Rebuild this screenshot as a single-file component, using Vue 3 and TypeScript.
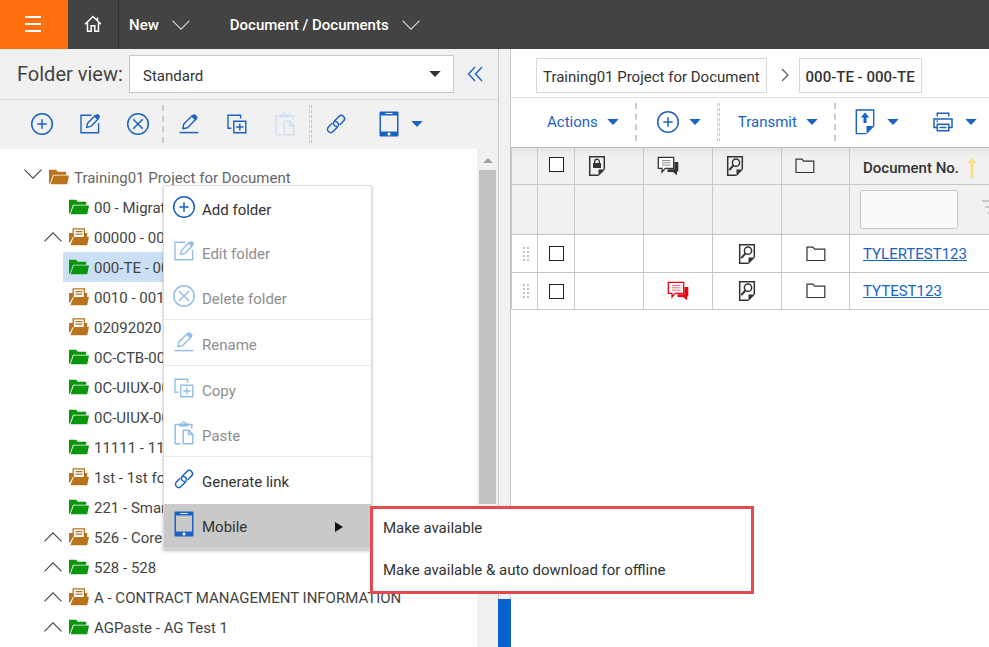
<script setup lang="ts">
import { ref } from 'vue'

interface TreeItem {
  label: string
  icon: 'folder' | 'folder-doc'
  expandable?: boolean
}

interface MenuItem {
  label: string
  icon: string
  disabled?: boolean
  divider?: boolean
}

interface DocumentRow {
  number: string
  flagged: boolean
}

const folderView = ref('Standard')
const numberFilter = ref('')
const selected = ref('000-TE - 000-TE')

const folders: TreeItem[] = [
  { label: '00 - Migration', icon: 'folder' },
  { label: '00000 - 00000', icon: 'folder-doc', expandable: true },
  { label: '000-TE - 000-TE', icon: 'folder' },
  { label: '0010 - 0010', icon: 'folder-doc' },
  { label: '02092020', icon: 'folder-doc' },
  { label: '0C-CTB-001', icon: 'folder' },
  { label: '0C-UIUX-001', icon: 'folder' },
  { label: '0C-UIUX-002', icon: 'folder' },
  { label: '11111 - 11111', icon: 'folder' },
  { label: '1st - 1st folder', icon: 'folder-doc' },
  { label: '221 - Smart', icon: 'folder' },
  { label: '526 - Core', icon: 'folder-doc', expandable: true },
  { label: '528 - 528', icon: 'folder', expandable: true },
  { label: 'A - CONTRACT MANAGEMENT INFORMATION', icon: 'folder-doc', expandable: true },
  { label: 'AGPaste - AG Test 1', icon: 'folder', expandable: true },
]

const menuItems: MenuItem[] = [
  { label: 'Add folder', icon: 'add' },
  { label: 'Edit folder', icon: 'edit', disabled: true },
  { label: 'Delete folder', icon: 'delete', disabled: true, divider: true },
  { label: 'Rename', icon: 'rename', disabled: true, divider: true },
  { label: 'Copy', icon: 'copy', disabled: true },
  { label: 'Paste', icon: 'paste', disabled: true, divider: true },
  { label: 'Generate link', icon: 'link' },
]

const rows: DocumentRow[] = [
  { number: 'TYLERTEST123', flagged: false },
  { number: 'TYTEST123', flagged: true },
]
</script>

<template>
  <div class="app">
    <svg class="sprite" aria-hidden="true">
      <symbol id="add" viewBox="0 0 24 24">
        <g fill="none" stroke="currentColor" stroke-width="1.5">
          <circle cx="12" cy="12" r="10.3" /><path d="M12 7.3v9.4M7.3 12h9.4" />
        </g>
      </symbol>
      <symbol id="delete" viewBox="0 0 24 24">
        <g fill="none" stroke="currentColor" stroke-width="1.5">
          <circle cx="12" cy="12" r="10.3" /><path d="M7.2 7.2l9.6 9.6M16.8 7.2l-9.6 9.6" />
        </g>
      </symbol>
      <symbol id="edit" viewBox="0 0 24 24">
        <path d="M13.5 3.2H3v17.6h17.6V11" fill="none" stroke="currentColor" stroke-width="1.4" />
        <path d="M8.6 15.4l1-4.2 7.6-7.7 3.2 3.2-7.7 7.7z" fill="none" stroke="currentColor" stroke-width="1.4" stroke-linejoin="round" />
        <path d="M16.2 4.6l2.2-2.2q1-.8 2 0l1.2 1.2q.8 1 0 2l-2.2 2.2z" fill="currentColor" />
      </symbol>
      <symbol id="rename" viewBox="0 0 24 24">
        <path d="M2.5 20.6h18.8" stroke="currentColor" stroke-width="1.5" />
        <path d="M5.8 16.8l1-4.8 8.6-8.6 3.7 3.7-8.6 8.6z" fill="none" stroke="currentColor" stroke-width="1.4" stroke-linejoin="round" />
        <path d="M14.2 4.6l2-2q1-.8 2 0l2 2q.8 1 0 2l-2 2z" fill="currentColor" />
      </symbol>
      <symbol id="copy" viewBox="0 0 24 24">
        <g fill="none" stroke="currentColor" stroke-width="1.4">
          <path d="M6.4 16.2H3V3.2h12.6v3.4" /><path d="M8.8 9.2h12v11.6h-12z" /><path d="M14.8 11.4v7.2M11.2 15h7.2" />
        </g>
      </symbol>
      <symbol id="paste" viewBox="0 0 24 26">
        <g fill="none" stroke="currentColor" stroke-width="1.5">
          <path d="M8.600 23.800H3.200V4.400h16.600v4" /><path d="M11.200 10.200h5.400l4.200 4.200v9.400h-9.600zM16.600 10.200v4.200h4.200" />
        </g>
        <path d="M7 6.6V3.4h2.4Q9.800 1.200 11.700 1.200Q13.600 1.200 14 3.400h2.400v3.200z" fill="currentColor" />
        <circle cx="11.700" cy="3.300" r=".8" fill="#fff" />
      </symbol>
      <symbol id="link" viewBox="0 0 24 24">
        <g transform="rotate(-45 12 12)" fill="none" stroke="currentColor" stroke-width="1.500" stroke-linecap="round">
          <path d="M14.500 15.200H19.500a3.200 3.200 0 0 0 0-6.400H13a3.200 3.200 0 0 0-2.400 5.300" />
          <path d="M9.500 8.800H4.500a3.200 3.200 0 0 0 0 6.400H11a3.200 3.200 0 0 0 2.400-5.300" />
        </g>
      </symbol>
      <symbol id="tablet" viewBox="0 0 20 26">
        <path fill="currentColor" fill-rule="evenodd" d="M1.500.5h17q1 0 1 1v23q0 1-1 1h-17q-1 0-1-1v-23q0-1 1-1zM2 4.500v16h16v-16z" />
        <path d="M6.500 2.500h7" stroke="#fff" stroke-width="1" /><circle cx="10" cy="23" r="1.500" fill="#fff" />
      </symbol>
      <symbol id="caret" viewBox="0 0 12 6"><path d="M.3 0h11.400L6 6z" fill="currentColor" /></symbol>
      <symbol id="chevron" viewBox="0 0 18 10"><path d="M.5.6L9 9.200 17.500.6" fill="none" stroke="currentColor" stroke-width="1.100" /></symbol>
      <symbol id="folder" viewBox="0 0 20 16">
        <path d="M0 .8h7l1.800 2h8.400v3H4L1 14.500H0z" fill="currentColor" />
        <path d="M4.700 6.400H20l-1.800 8.800H1.600z" fill="currentColor" />
      </symbol>
      <symbol id="folder-doc" viewBox="0 0 20 18">
        <path d="M0 5h4v3.800L1 14.500H0z" fill="currentColor" />
        <path d="M4.200 9V.9h11.200v8" fill="#fff" stroke="currentColor" stroke-width="1.300" />
        <path d="M6.500 3.600h6.800M6.500 6.200h6.800" stroke="currentColor" stroke-width="1.200" />
        <path d="M16 5h2.200v4H16z" fill="currentColor" />
        <path d="M4.700 9H20l-1.800 8.300H1.400z" fill="currentColor" />
      </symbol>
      <symbol id="lock-page" viewBox="0 0 18 22">
        <path d="M10.500 20.200H1.700V1.800h14.600v12.700" fill="none" stroke="currentColor" stroke-width="1.500" />
        <path d="M10.500 21v-6.500H17z" fill="currentColor" />
        <path d="M5 8h8v5H5z" fill="currentColor" /><path d="M6.700 8V6.500a2.300 2.300 0 0 1 4.600 0V8" fill="none" stroke="currentColor" stroke-width="1.300" />
      </symbol>
      <symbol id="search-page" viewBox="0 0 18 22">
        <path d="M10.500 20.200H1.700V1.800h14.600v12.700" fill="none" stroke="currentColor" stroke-width="1.500" />
        <path d="M10.500 21v-6.500H17z" fill="currentColor" />
        <circle cx="10" cy="7.700" r="3.600" fill="none" stroke="currentColor" stroke-width="1.500" />
        <path d="M7.400 10.500L3.200 15.200" stroke="currentColor" stroke-width="2" />
      </symbol>
      <symbol id="comments" viewBox="0 0 22 20">
        <path d="M17.400 6h3.900v9.500H20v3.800L16 16h-5.500v-2.800h6.900z" fill="currentColor" />
        <path d="M1.300 1.300h15.400v11H8.300L5 16v-3.700H1.300z" fill="#fff" stroke="currentColor" stroke-width="1.300" />
        <path d="M5 4.500h8.500M5 6.800h8.500M5 9.100h8.500" stroke="currentColor" stroke-width=".8" opacity=".7" />
      </symbol>
      <symbol id="folder-outline" viewBox="0 0 20 16">
        <path d="M1 14.500V1.200h6l1.600 2h10.200v11.300z" fill="none" stroke="currentColor" stroke-width="1.200" />
      </symbol>
      <symbol id="upload-page" viewBox="0 0 20 26">
        <path d="M11 24.600H1.300V1h17.400v16" fill="none" stroke="currentColor" stroke-width="1.400" />
        <path d="M11.500 25.300v-8.300h8z" fill="currentColor" />
        <path d="M10 3.600l4.300 4.900h-2.800v5.500h-3V8.500H5.700z" fill="currentColor" />
      </symbol>
      <symbol id="printer" viewBox="0 0 20 20">
        <g fill="none" stroke="currentColor" stroke-width="1.500">
          <path d="M4.300 4.500V1.200h11.400v3.300M4.300 15.500H1V7h18v8.500h-3.300M4.300 12.200h11.400v6.600H4.300zM6.500 15.500h7M3.500 9.300h1.500" />
        </g>
      </symbol>
      <symbol id="grip" viewBox="0 0 7 16">
        <path d="M0 1h2v2H0zM4 1h2v2H4zM0 5h2v2H0zM4 5h2v2H4zM0 9h2v2H0zM4 9h2v2H4zM0 13h2v2H0zM4 13h2v2H4z" fill="currentColor" />
      </symbol>
    </svg>

    <header class="topbar">
      <button class="burger" aria-label="Menu">
        <svg width="16" height="16" viewBox="0 0 16 16"><path d="M0 1h16M0 8h16M0 15h16" stroke="currentColor" stroke-width="2" /></svg>
      </button>
      <button class="home" aria-label="Home">
        <svg width="18" height="18" viewBox="0 0 18 18"><path d="M1 9.200L9 1.500l8 7.700M3.500 7.500v8.800h3.700v-5.500h3.600v5.500h3.700V7.500M13.500 2.500v3" fill="none" stroke="currentColor" stroke-width="1.500" /></svg>
      </button>
      <button class="top-menu new">New <svg class="chevron"><use href="#chevron" /></svg></button>
      <button class="top-menu">Document / Documents <svg class="chevron"><use href="#chevron" /></svg></button>
    </header>

    <div class="workspace">
      <section class="sidebar">
        <div class="view-row">
          <label for="folder-view">Folder view:</label>
          <div class="select-box">
            <select id="folder-view" v-model="folderView"><option>Standard</option></select>
            <svg class="caret"><use href="#caret" /></svg>
          </div>
          <button class="collapse" aria-label="Collapse panel">
            <svg width="16" height="16" viewBox="0 0 16 16"><path d="M8 1L1.500 8 8 15M15 1L8.500 8 15 15" fill="none" stroke="currentColor" stroke-width="1.400" /></svg>
          </button>
        </div>
        <div class="folder-tools">
          <button aria-label="Add folder"><svg class="ico"><use href="#add" /></svg></button>
          <button aria-label="Edit folder"><svg class="ico"><use href="#edit" /></svg></button>
          <button aria-label="Delete folder"><svg class="ico"><use href="#delete" /></svg></button>
          <span class="dash"></span>
          <button aria-label="Rename"><svg class="ico"><use href="#rename" /></svg></button>
          <button aria-label="Copy"><svg class="ico"><use href="#copy" /></svg></button>
          <button aria-label="Paste" disabled><svg class="ico tall"><use href="#paste" /></svg></button>
          <span class="dash double"></span>
          <button aria-label="Generate link"><svg class="ico"><use href="#link" /></svg></button>
          <button class="mobile-tool" aria-label="Mobile"><svg class="page-ico"><use href="#tablet" /></svg><svg class="caret"><use href="#caret" /></svg></button>
        </div>
        <div class="tree-area">
          <ul class="tree">
            <li class="root">
              <button class="toggle" aria-label="Collapse"><svg class="chevron"><use href="#chevron" /></svg></button>
              <a href="#" class="node brown"><svg class="folder-ico"><use href="#folder" /></svg><span>Training01 Project for Document</span></a>
            </li>
            <li v-for="item in folders" :key="item.label">
              <button v-if="item.expandable" class="toggle up" aria-label="Expand"><svg class="chevron"><use href="#chevron" /></svg></button>
              <span v-else class="toggle"></span>
              <a
                href="#"
                class="node"
                :class="{ brown: item.icon === 'folder-doc', selected: item.label === selected }"
                @click.prevent="selected = item.label"
              >
                <svg class="folder-ico"><use :href="'#' + item.icon" /></svg><span>{{ item.label }}</span>
              </a>
            </li>
          </ul>
          <div class="scroll-track">
            <span class="scroll-arrow"></span>
            <span class="scroll-thumb"></span>
          </div>
        </div>
      </section>

      <div class="splitter"><span></span></div>

      <main class="content">
        <nav class="crumbs" aria-label="Breadcrumb">
          <a href="#">Training01 Project for Document</a>
          <svg width="8" height="14" viewBox="0 0 8 14"><path d="M1 1l6 6-6 6" fill="none" stroke="#555" stroke-width="1.100" /></svg>
          <a href="#" class="current">000-TE - 000-TE</a>
        </nav>
        <div class="doc-tools">
          <button class="first">Actions <svg class="caret"><use href="#caret" /></svg></button>
          <span class="dash"></span>
          <button aria-label="Add"><svg class="ico"><use href="#add" /></svg><svg class="caret"><use href="#caret" /></svg></button>
          <span class="dash double"></span>
          <button>Transmit <svg class="caret"><use href="#caret" /></svg></button>
          <span class="dash"></span>
          <button aria-label="Upload"><svg class="page-ico"><use href="#upload-page" /></svg><svg class="caret wide-gap"><use href="#caret" /></svg></button>
          <button aria-label="Print"><svg class="print-ico"><use href="#printer" /></svg><svg class="caret wide-gap"><use href="#caret" /></svg></button>
        </div>
        <table>
          <colgroup>
            <col class="c-grip" /><col class="c-check" /><col class="c-icon" /><col class="c-icon" /><col class="c-icon" /><col class="c-folder" /><col />
          </colgroup>
          <thead>
            <tr>
              <th></th>
              <th class="check"><input type="checkbox" aria-label="Select all" /></th>
              <th class="type"><svg class="sheet"><use href="#lock-page" /></svg></th>
              <th class="type"><svg class="talk"><use href="#comments" /></svg></th>
              <th class="type"><svg class="sheet"><use href="#search-page" /></svg></th>
              <th class="type"><svg class="outline"><use href="#folder-outline" /></svg></th>
              <th class="number">
                <div>
                  <span>Document No.</span>
                  <svg width="10" height="20" viewBox="0 0 10 20"><path d="M5 0l5 5.500H6.500V20h-3V5.500H0z" fill="#fbe08a" /></svg>
                </div>
              </th>
            </tr>
            <tr class="filter">
              <td></td><td></td><td></td><td></td><td></td><td></td>
              <td>
                <div>
                  <input v-model="numberFilter" type="text" aria-label="Filter by document number" />
                  <button aria-label="Filter options"><svg width="16" height="14" viewBox="0 0 16 14"><path d="M0 1h16M3 7h10M6 13h4" stroke="currentColor" stroke-width="1.500" /></svg></button>
                </div>
              </td>
            </tr>
          </thead>
          <tbody>
            <tr v-for="row in rows" :key="row.number">
              <td><svg class="grip"><use href="#grip" /></svg></td>
              <td class="check"><input type="checkbox" :aria-label="'Select ' + row.number" /></td>
              <td></td>
              <td><svg v-if="row.flagged" class="talk red"><use href="#comments" /></svg></td>
              <td><svg class="sheet"><use href="#search-page" /></svg></td>
              <td><svg class="outline"><use href="#folder-outline" /></svg></td>
              <td class="number"><a href="#">{{ row.number }}</a></td>
            </tr>
          </tbody>
        </table>
      </main>
    </div>

    <div class="context-menu" role="menu">
      <button
        v-for="item in menuItems"
        :key="item.label"
        role="menuitem"
        :disabled="item.disabled"
        :class="{ divider: item.divider }"
      >
        <svg class="ico" :class="{ tall: item.icon === 'paste' }"><use :href="'#' + item.icon" /></svg><span>{{ item.label }}</span>
      </button>
      <button role="menuitem" class="open" aria-haspopup="true" aria-expanded="true">
        <svg class="page-ico"><use href="#tablet" /></svg><span>Mobile</span>
        <svg class="arrow" viewBox="0 0 8 10"><path d="M0 0l8 5-8 5z" fill="currentColor" /></svg>
      </button>
    </div>
    <div class="submenu" role="menu">
      <button role="menuitem">Make available</button>
      <button role="menuitem">Make available &amp; auto download for offline</button>
    </div>
  </div>
</template>

<style>
body {
  overflow: hidden;
}
</style>

<style scoped>
.app {
  position: relative;
  display: flex;
  flex-direction: column;
  height: 100vh;
  overflow: hidden;
  background: #fff;
  color: #333;
  font: 15px/20px Roboto, 'Liberation Sans', sans-serif;
}
* {
  box-sizing: border-box;
}
button,
input,
select {
  margin: 0;
  padding: 0;
  border: 0;
  border-radius: 0;
  background: none;
  color: inherit;
  font: inherit;
}
a {
  color: inherit;
  text-decoration: none;
}
svg {
  display: block;
  flex: none;
}
.sprite {
  position: absolute;
  width: 0;
  height: 0;
}
.ico {
  width: 24px;
  height: 24px;
}
.ico.tall {
  height: 26px;
}
.page-ico {
  width: 20px;
  height: 26px;
}
.print-ico {
  width: 20px;
  height: 20px;
}
.caret {
  width: 12px;
  height: 6px;
}
.chevron {
  width: 18px;
  height: 10px;
}

.topbar {
  display: flex;
  flex: none;
  height: 49px;
  background: #434343;
  color: #fff;
}
.topbar button {
  display: flex;
  align-items: center;
}
.topbar .burger {
  justify-content: center;
  width: 68px;
  padding: 0 2px 2px 0;
  background: #ff6f10;
}
.topbar .home {
  justify-content: center;
  width: 51px;
  padding-bottom: 2px;
  border-right: 1px solid #333;
}
.top-menu {
  gap: 13px;
  padding: 0 30px 0 10px;
  font-weight: 500;
}
.top-menu .chevron {
  color: #ddd;
}

.workspace {
  display: grid;
  flex: 1;
  grid-template-columns: 498px 13px minmax(0, 1fr);
  min-height: 0;
}
.sidebar {
  display: flex;
  flex-direction: column;
  min-height: 0;
}
.view-row {
  display: flex;
  align-items: center;
  flex: none;
  height: 51px;
  padding: 0 15px 0 17px;
  border-bottom: 1px solid #dcdcdc;
  background: #f1f1f1;
}
.view-row label {
  width: 112px;
  color: #444;
  font-size: 20px;
  white-space: nowrap;
}
.select-box {
  position: relative;
  flex: 1;
}
.select-box select {
  display: block;
  width: 100%;
  height: 38px;
  padding: 3px 30px 0 13px;
  border: 1px solid #c8c8c8;
  background: #fff;
  appearance: none;
}
.select-box .caret {
  position: absolute;
  top: 16px;
  right: 13px;
  pointer-events: none;
}
.collapse {
  margin-left: 13px;
  color: #1a62c4;
}
.folder-tools,
.doc-tools {
  display: flex;
  align-items: center;
  flex: none;
  color: #1a62c4;
}
.folder-tools {
  height: 49px;
  padding: 0 0 2px 18px;
  background: #f1f1f1;
}
.folder-tools button {
  display: flex;
  justify-content: center;
  width: 48px;
}
.folder-tools button:disabled {
  color: #cfe0f3;
}
.folder-tools .mobile-tool {
  align-items: center;
  gap: 12px;
  width: 82px;
}
.dash {
  flex: none;
  width: 3px;
  height: 38px;
  border-left: 2px dashed #ccc;
}
.dash.double {
  border-right: 1px dashed #c4c4c4;
  border-left-width: 1px;
}
.tree-area {
  display: flex;
  flex: 1;
  min-height: 0;
}
.tree {
  flex: 1;
  min-width: 0;
  margin: 0;
  padding: 13px 0 0 44px;
  overflow: hidden;
  color: #444;
  list-style: none;
}
.tree li {
  display: flex;
  height: 30px;
}
.tree .root {
  margin-left: -20px;
  color: #666;
}
.toggle {
  display: flex;
  align-items: center;
  flex: none;
  width: 19px;
  color: #444;
}
.root .toggle {
  padding-bottom: 6px;
}
.toggle.up svg {
  transform: rotate(180deg);
}
.node {
  display: flex;
  align-items: center;
  gap: 5px;
  padding: 0 6px;
  white-space: nowrap;
}
.node span {
  padding-top: 1px;
}
.node.selected {
  background: #cce0f5;
}
.folder-ico {
  width: 20px;
  height: 18px;
  color: #0a960a;
}
.brown .folder-ico {
  color: #b9731c;
}
.scroll-track {
  display: flex;
  flex-direction: column;
  align-items: center;
  width: 21px;
  background: #f1f1f1;
}
.scroll-arrow {
  margin: 9px 0 7px;
  border: 5px solid transparent;
  border-top: 0;
  border-bottom-color: #a0a0a0;
}
.scroll-thumb {
  width: 17px;
  height: 67%;
  background: #c1c1c1;
}

.splitter {
  display: flex;
  align-items: flex-end;
  border: solid #c8c8c8;
  border-width: 0 1px;
  background: #f1f1f1;
}
.splitter span {
  flex: 1;
  height: 48px;
  margin: 0 -1px;
  background: #0561cb;
}

.content {
  min-width: 0;
  overflow: hidden;
}
.crumbs {
  display: flex;
  align-items: center;
  gap: 10px;
  height: 49px;
  padding: 4px 0 0 25px;
  border-bottom: 1px solid #dcdcdc;
  white-space: nowrap;
}
.crumbs a {
  padding: 8px 6px 5px;
  border: 1px solid #d8d8d8;
}
.crumbs svg {
  margin-left: 4px;
}
.crumbs .current {
  font-weight: 500;
}
.doc-tools {
  height: 49px;
  padding-bottom: 2px;
}
.doc-tools button {
  display: flex;
  align-items: center;
  gap: 9px;
  padding: 0 16px 0 18px;
}
.doc-tools .first {
  padding-left: 36px;
}
.doc-tools .wide-gap {
  margin-left: 3px;
}

table {
  width: 100%;
  border-collapse: collapse;
  table-layout: fixed;
  border-left: 1px solid #c8c8c8;
}
.c-grip {
  width: 26px;
}
.c-check {
  width: 37px;
}
.c-icon {
  width: 69px;
}
.c-folder {
  width: 68px;
}
th,
td {
  height: 37px;
  padding: 0;
  border: 1px solid #c8c8c8;
  border-right: 0;
}
thead {
  background: #f1f1f1;
}
thead tr:first-child th {
  border-top: 1px solid #bbb;
  background: linear-gradient(#e4e4e4, #f1f1f1 8px);
}
.filter td {
  height: 50px;
}
tbody td {
  height: 38px;
}
tbody tr:last-child td {
  height: 37px;
}
td > svg {
  margin: 0 auto;
}
.sheet {
  width: 18px;
  height: 22px;
}
.talk {
  width: 22px;
  height: 20px;
}
.outline {
  width: 20px;
  height: 16px;
}
.red {
  color: #f00010;
}
.grip {
  width: 7px;
  height: 16px;
  color: #c4c4c4;
}
td > .grip {
  margin-right: 7px;
}
.type svg {
  margin-left: 13px;
}
.check {
  text-align: center;
}
th.check {
  padding-bottom: 3px;
}
.check input {
  display: block;
  width: 15px;
  height: 15px;
  margin: 0 auto;
  border: 1px solid #222;
  background: #fff;
  appearance: none;
}
.check input:checked {
  background: #1a62c4;
}
.number {
  padding-left: 13px;
  text-align: left;
  font-weight: 400;
}
.number div {
  display: flex;
  align-items: center;
  gap: 8px;
  padding-top: 3px;
  font-weight: 500;
  white-space: nowrap;
}
.number a {
  color: #1a62c4;
  text-decoration: underline;
}
.filter div {
  display: flex;
  align-items: center;
  gap: 24px;
  padding-left: 10px;
  overflow: hidden;
}
.filter input {
  flex: none;
  width: 98px;
  height: 39px;
  padding: 0 8px;
  border: 1px solid #c8c8c8;
  border-radius: 2px;
  background: #fafafa;
}
.filter button {
  padding-bottom: 6px;
  color: #bbb;
}

.context-menu {
  position: absolute;
  top: 185px;
  left: 163px;
  width: 209px;
  border: 1px solid #ddd;
  background: #fff;
  box-shadow: 0 2px 3px rgba(0, 0, 0, 0.25);
}
.context-menu button {
  display: flex;
  align-items: center;
  gap: 6px;
  width: 100%;
  height: 45px;
  padding: 0 0 2px 8px;
}
.context-menu button:first-child {
  height: 43px;
}
.context-menu button:disabled {
  color: #8e8e8e;
}
.context-menu .divider {
  height: 46px;
  border-bottom: 1px solid #ebebeb;
}
.context-menu span {
  padding-top: 6px;
}
.context-menu .ico,
.context-menu .page-ico {
  color: #1a62c4;
}
.context-menu :disabled .ico {
  color: #94bde8;
}
.context-menu .open {
  gap: 8px;
  height: 44px;
  margin-top: 2px;
  padding: 0 28px 4px 10px;
  background: #c9c9c9;
}
.arrow {
  width: 8px;
  height: 10px;
  margin: 5px 0 0 auto;
  color: #111;
}
.submenu {
  position: absolute;
  top: 506px;
  left: 370px;
  width: 384px;
  border: 3px solid #e4494d;
  background: #fff;
}
.submenu button {
  display: block;
  width: 100%;
  height: 41px;
  padding: 0 10px 4px;
  text-align: left;
}
.submenu button + button {
  padding-bottom: 2px;
}
</style>
